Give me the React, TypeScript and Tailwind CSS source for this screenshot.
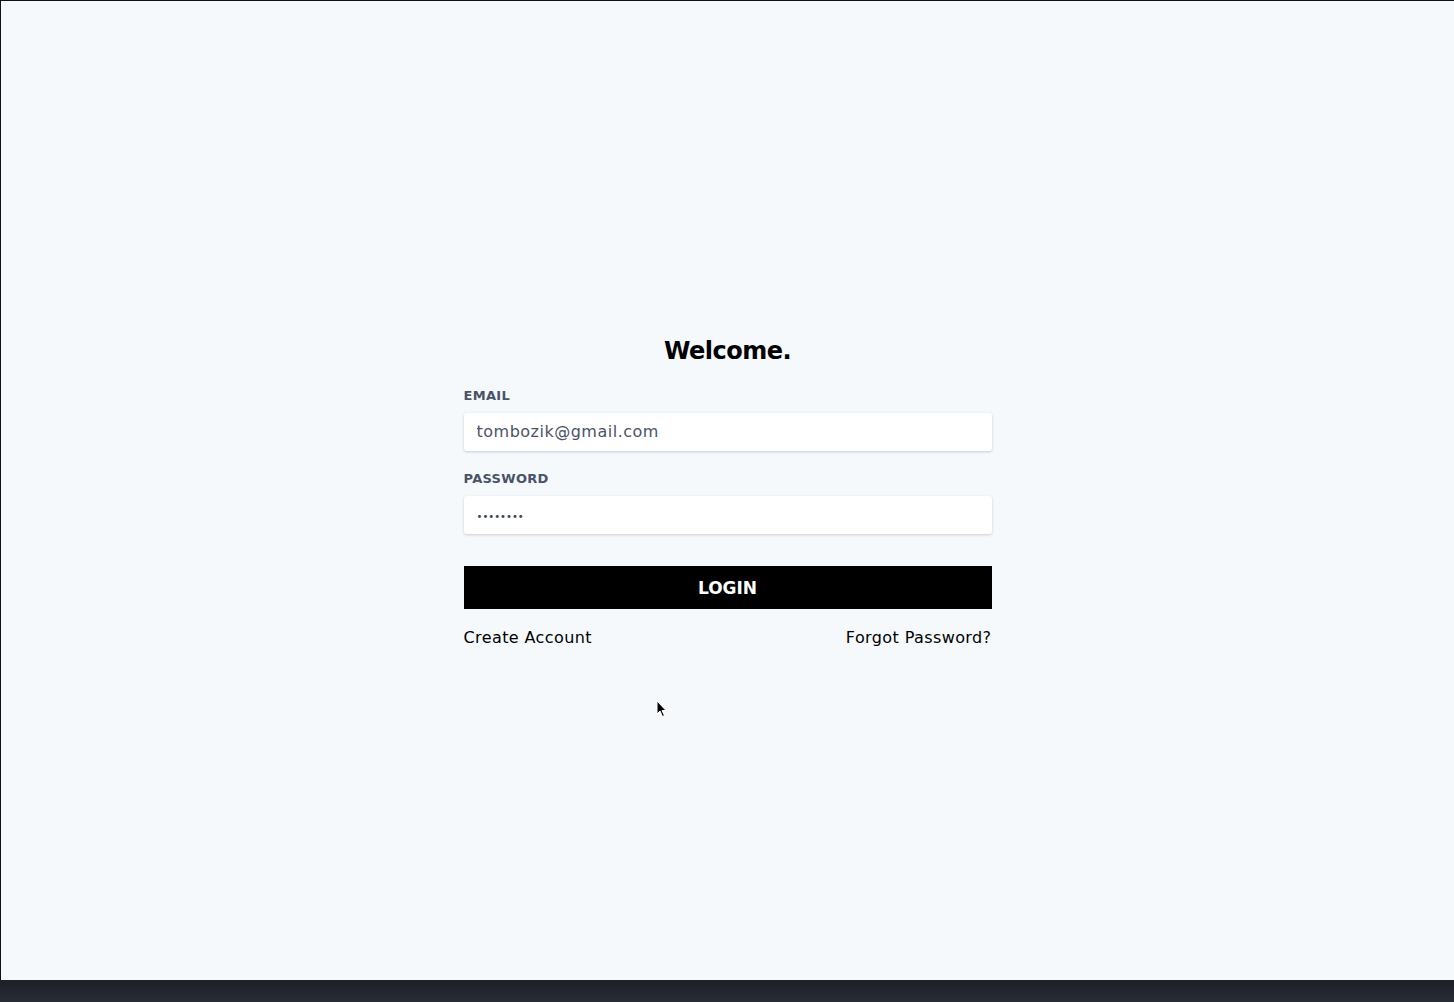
export default function App() {
  return (
    <div className="flex h-[1002px] w-[1454px] flex-col bg-[#23262e]" style={{ fontFamily: '"DejaVu Sans", sans-serif' }}>
      <div className="relative flex h-[980px] items-center justify-center border-t border-l border-[#111] bg-[#f5f9fc]">
        <form className="flex w-[528px] flex-col pt-[2px]" onSubmit={(e) => e.preventDefault()}>
          <h1 className="mb-[22px] text-center text-[24px] leading-[30px] font-bold tracking-[-0.5px] text-black">Welcome.</h1>

          <label className="mb-[9px] text-[13px] leading-[16px] font-bold tracking-[0.3px] text-[#4a5366]">EMAIL</label>
          <input
            className="h-[38px] rounded-[3px] bg-white px-[13px] text-[16px] tracking-[0.5px] text-[#4a5366] shadow-[0_1px_3px_rgba(0,0,0,0.18)] outline-none"
            defaultValue="tombozik@gmail.com"
          />

          <label className="mt-[20px] mb-[9px] text-[13px] leading-[16px] font-bold tracking-[0.3px] text-[#4a5366]">PASSWORD</label>
          <input
            type="password"
            className="h-[38px] rounded-[3px] bg-white px-[13px] pt-[3px] text-[10px] text-[#3d4557] shadow-[0_1px_3px_rgba(0,0,0,0.18)] outline-none"
            defaultValue="password"
          />

          <button className="mt-[32px] flex h-[43px] items-center justify-center bg-black pt-[3px] text-[17px] leading-none font-bold text-white">LOGIN</button>

          <div className="mt-[18px] flex justify-between text-[16px] leading-[21px] tracking-[0.4px] text-black">
            <a href="#">Create Account</a>
            <a href="#">Forgot Password?</a>
          </div>
        </form>

        {/* mouse pointer */}
        <svg className="absolute left-[655px] top-[699px]" width="11" height="18" viewBox="0 0 11 18">
          <path d="M1 1 L1 14 L4 11 L6.5 16.5 L8.5 15.5 L6 10.5 L10 10.5 Z" fill="#000" stroke="#fff" strokeWidth="1" />
        </svg>
      </div>
      <div className="h-[22px] bg-gradient-to-b from-[#1e2027] to-[#282c35]" />
    </div>
  );
}
